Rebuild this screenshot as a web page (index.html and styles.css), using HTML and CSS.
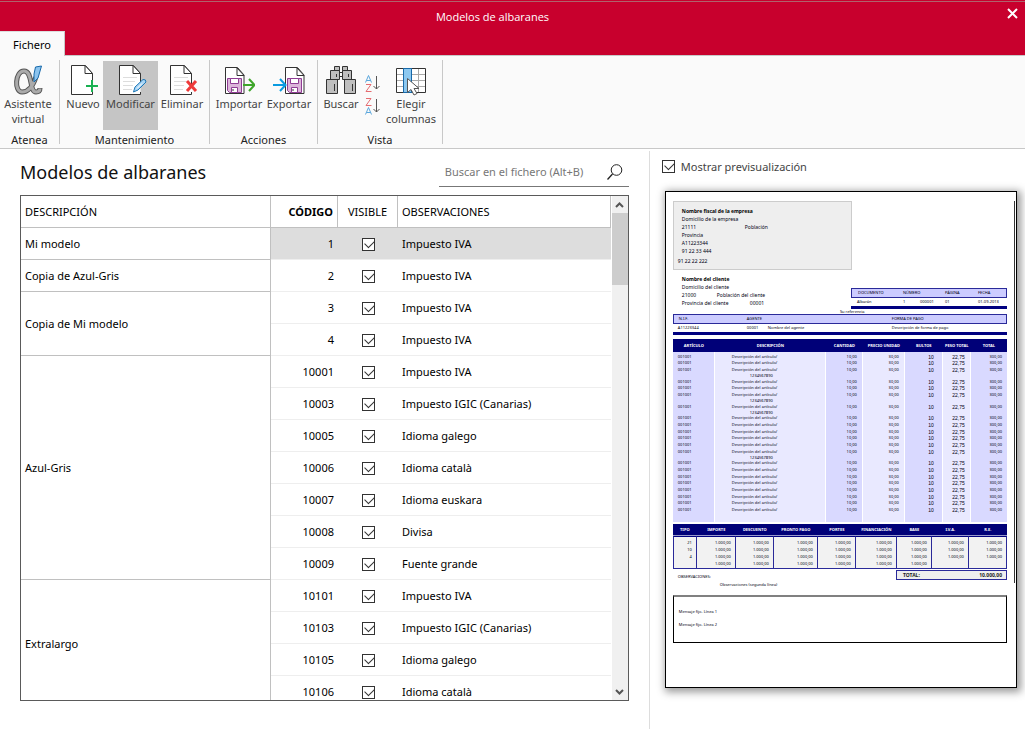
FILE: index.html
```html
<!DOCTYPE html>
<html lang="es">
<head>
<meta charset="utf-8">
<title>Modelos de albaranes</title>
<link rel="stylesheet" href="styles.css">
</head>
<body>
<svg class="defs" aria-hidden="true">
  <symbol id="sheet" viewBox="0 0 32 32">
    <path d="M25.500 20V9.500L18.500 1.500H4.500V30.500H25.500V28" fill="#fff" stroke="#333"/>
    <path d="M18 1.500V9.500H25.500Z" fill="#fff" stroke="#333" stroke-linejoin="round"/>
  </symbol>
  <symbol id="lines" viewBox="0 0 32 32"><path d="M8 13.500H22M8 17.500H20M8 21.500H18M8 25.500H17" stroke="#ddd"/></symbol>
  <symbol id="disk" viewBox="0 0 20 28">
    <path d="M.5.5H12.500L19 8V26.500H.5Z" fill="#fff" stroke="#333"/>
    <path d="M12 1V8.500H19Z" fill="#fff" stroke="#333"/>
    <path d="M2.500 11.500H16.500V25.500H4.500L2.500 23.500Z" fill="#dcb5da" stroke="#8f3d94"/>
    <path d="M5.500 11.500H13.500V16.500H5.500ZM6.500 20.500H12.500V25.500H6.500Z" fill="#fff" stroke="#8f3d94"/>
    <path d="M8 22V24" stroke="#333"/>
  </symbol>
  <symbol id="down" viewBox="0 0 7 14"><path d="M3.500 0V13M.5 10L3.500 13L6.500 10" fill="none" stroke="#555"/></symbol>
</svg>
<div class="window">
  <header class="titlebar">
    <h1 class="window-title">Modelos de albaranes</h1>
    <button class="tab" type="button">Fichero</button>
    <button class="close" type="button" aria-label="Cerrar"><svg width="11" height="11" viewBox="0 0 11 11"><path d="M1 1L10 10M10 1L1 10" stroke="#fff" stroke-width="2"/></svg></button>
  </header>
  <nav class="ribbon">
    <section class="group atenea">
      <div class="tools">
        <button class="tool" type="button">
          <svg class="icon" viewBox="0 0 32 32">
            <path d="M24 13C21 22 16 28 10 28C2 28 3 7 12 7C21 7 17 28 24 28Q28 28 28 24" fill="none" stroke="#555" stroke-width="5"/>
            <path d="M24 13C21 22 16 28 10 28C2 28 3 7 12 7C21 7 17 28 24 28Q28 28 28 24.500" fill="none" stroke="#aaa" stroke-width="3"/>
            <path d="M23.500 3L29.500 2L26 14L22 18V10Z" fill="#8cc4ef" stroke="#1769aa"/>
          </svg>Asistente<br>virtual</button>
      </div>
      <h2 class="group-name">Atenea</h2>
    </section>
    <section class="group mantenimiento">
      <div class="tools">
        <button class="tool new" type="button"><svg class="icon" viewBox="0 0 32 32"><use href="#sheet"/><path d="M25 16V28M19 22H31" stroke="#18b050" stroke-width="2"/></svg>Nuevo</button>
        <button class="tool active" type="button"><svg class="icon" viewBox="0 0 32 32"><use href="#sheet"/><use href="#lines"/><path d="M18.500 28L20 23L28 15.500Q31 15 31 18L23 26Z" fill="#a9d5f5" stroke="#1d78b8"/><path d="M22 24.500L27 19.500" stroke="#fff"/></svg>Modificar</button>
        <button class="tool" type="button"><svg class="icon" viewBox="0 0 32 32"><use href="#sheet"/><use href="#lines"/><path d="M21 17L30 27M30 17L21 27" stroke="#ee3a3a" stroke-width="3"/></svg>Eliminar</button>
      </div>
      <h2 class="group-name">Mantenimiento</h2>
    </section>
    <section class="group acciones">
      <div class="tools">
        <button class="tool" type="button"><svg class="icon" viewBox="0 0 32 32"><use href="#disk" x="2" y="3" width="20" height="28"/><path d="M20 21H31M26 15L31.500 21L26 27" fill="none" stroke="#3fa62b" stroke-width="2"/></svg>Importar</button>
        <button class="tool" type="button"><svg class="icon" viewBox="0 0 32 32"><use href="#disk" x="12" y="3" width="20" height="28"/><path d="M0 21H12M7 15L12.500 21L7 27" fill="none" stroke="#0a9be0" stroke-width="2"/></svg>Exportar</button>
      </div>
      <h2 class="group-name">Acciones</h2>
    </section>
    <section class="group vista">
      <div class="tools">
        <button class="tool find" type="button"><svg class="icon" viewBox="0 0 32 32"><path d="M9.500 2.500H14.500V6.500H9.500ZM17.500 2.500H22.500V6.500H17.500ZM5.500 6.500H14.500V15.500H5.500ZM17.500 6.500H26.500V15.500H17.500ZM1.500 15.500H12.500V29.500H1.500ZM19.500 15.500H30.500V29.500H19.500Z" fill="#bfbfbf" stroke="#333"/><path d="M14.500 8.500H17.500M14.500 12.500H17.500M9.500 20V27M27.500 20V27M11.500 10V13M23.500 10V13" stroke="#333"/></svg>Buscar</button>
        <div class="sorts">
          <button class="sort" type="button" aria-label="Orden ascendente"><svg width="15" height="17" viewBox="0 0 15 17"><path d="M.5 7.500L3.500.5L6.500 7.500M1.500 5.500H5.500" fill="none" stroke="#5ba7dc"/><path d="M1 9.500H6L1 16.500H6.500" fill="none" stroke="#e56b70"/><use href="#down" x="8" y="1" width="7" height="14"/></svg></button>
          <button class="sort" type="button" aria-label="Orden descendente"><svg width="15" height="17" viewBox="0 0 15 17"><path d="M1 .5H6L1 7.500H6.500" fill="none" stroke="#e56b70"/><path d="M.5 16.500L3.500 9.500L6.500 16.500M1.500 14.500H5.500" fill="none" stroke="#5ba7dc"/><use href="#down" x="8" y="1" width="7" height="14"/></svg></button>
        </div>
        <button class="tool columns" type="button"><svg class="icon" viewBox="0 0 32 32"><path d="M1.500 4.500H30.500V28.500H1.500Z" fill="#fff" stroke="#333"/><path d="M2 10.500H30M2 16.500H30M2 22.500H30M23.500 5V28" stroke="#aaa"/><path d="M8.500 4.500H16.500V28.500H8.500Z" fill="#8cc8f0" stroke="#1769aa"/><path d="M12.500 14.500V28.500L16 25.500L19 31L22 29.500L19 24.500H24Z" fill="#fff" stroke="#555"/></svg>Elegir<br>columnas</button>
      </div>
      <h2 class="group-name">Vista</h2>
    </section>
  </nav>
  <main class="content">
    <section class="list">
      <div class="list-head">
        <h2 class="list-title">Modelos de albaranes</h2>
        <div class="search">
          <input class="search-box" type="text" aria-label="Buscar en el fichero" placeholder="Buscar en el fichero (Alt+B)">
          <button class="search-go" type="button" aria-label="Buscar"><svg width="16" height="16" viewBox="0 0 16 16"><circle cx="9.500" cy="6" r="5.300" fill="none" stroke="#222"/><path d="M5.500 10L.5 15.500" stroke="#222" stroke-width="1.300"/></svg></button>
        </div>
      </div>
      <div class="grid-frame">
        <div class="grid-view">
          <table class="grid">
            <colgroup><col class="c-desc"><col class="c-code"><col class="c-vis"><col></colgroup>
            <thead><tr><th>DESCRIPCIÓN</th><th class="code sorted">CÓDIGO</th><th class="vis">VISIBLE</th><th>OBSERVACIONES</th></tr></thead>
            <tbody id="models"></tbody>
          </table>
        </div>
        <div class="scroll">
          <button class="arrow" type="button" aria-label="Subir"><svg width="9" height="6" viewBox="0 0 9 6"><path d="M1 5L4.500 1.500L8 5" fill="none" stroke="#555" stroke-width="2"/></svg></button>
          <div class="thumb"></div>
          <button class="arrow last" type="button" aria-label="Bajar"><svg width="9" height="6" viewBox="0 0 9 6"><path d="M1 1L4.500 4.500L8 1" fill="none" stroke="#555" stroke-width="2"/></svg></button>
        </div>
      </div>
    </section>
    <aside class="preview">
      <label class="show"><input class="check" type="checkbox" checked>Mostrar previsualización</label>
      <article class="paper">
        <div class="rule"></div>
        <div class="company">
          <p class="strong">Nombre fiscal de la empresa</p>
          <p>Domicilio de la empresa</p>
          <p class="pair"><span class="wide">21111</span><span>Población</span></p>
          <p>Provincia</p>
          <p>A11223344</p>
          <p>91 22 33 444</p>
          <p class="phone">91 22 22 222</p>
        </div>
        <div class="who">
          <div class="client">
            <p class="strong">Nombre del cliente</p>
            <p>Domicilio del cliente</p>
            <p class="pair"><span class="zip">21000</span><span>Población del cliente</span></p>
            <p class="pair"><span class="prov">Provincia del cliente</span><span>00001</span></p>
          </div>
          <table class="strip doc">
            <colgroup><col class="d1"><col class="d2"><col class="d3"><col class="d4"><col></colgroup>
            <thead><tr><th>DOCUMENTO</th><th colspan="2">NÚMERO</th><th>PÁGINA</th><th>FECHA</th></tr></thead>
            <tbody><tr><td>Albarán</td><td>1</td><td>000001</td><td>01</td><td>01-09-2013</td></tr></tbody>
          </table>
        </div>
        <p class="ref">Su referencia</p>
        <table class="strip agent">
          <colgroup><col class="a1"><col class="a2"><col class="a3"><col></colgroup>
          <thead><tr><th>N.I.F.</th><th colspan="2">AGENTE</th><th>FORMA DE PAGO</th></tr></thead>
          <tbody><tr><td>A11223344</td><td>00001</td><td>Nombre del agente</td><td>Descripción de forma de pago</td></tr></tbody>
        </table>
        <table class="items">
          <colgroup><col class="i1"><col class="i2"><col class="i3"><col class="i4"><col class="i5"><col class="i6"><col></colgroup>
          <thead><tr><th>ARTÍCULO</th><th>DESCRIPCIÓN</th><th>CANTIDAD</th><th>PRECIO UNIDAD</th><th>BULTOS</th><th>PESO TOTAL</th><th>TOTAL</th></tr></thead>
          <tbody id="items"></tbody>
        </table>
        <table class="taxes">
          <colgroup><col class="t1"><col class="t2"><col class="t3"><col class="t4"><col class="t5"><col class="t6"><col class="t7"><col class="t8"><col></colgroup>
          <thead><tr><th>TIPO</th><th>IMPORTE</th><th>DESCUENTO</th><th>PRONTO PAGO</th><th>PORTES</th><th>FINANCIACIÓN</th><th>BASE</th><th>I.V.A.</th><th>R.E.</th></tr></thead>
          <tbody id="taxes"></tbody>
        </table>
        <div class="sum"><p class="obs">OBSERVACIONES:</p><p class="total"><span>TOTAL:</span><span>10.000,00</span></p></div>
        <p class="obs2">Observaciones (segunda línea)</p>
        <div class="message"><p>Mensaje fijo. Línea 1</p><p>Mensaje fijo. Línea 2</p></div>
      </article>
    </aside>
  </main>
</div>
<script src="main.js"></script>
</body>
</html>
```
FILE: main.js
```js
const groups = [
  ["Mi modelo", [[1, "Impuesto IVA"]]],
  ["Copia de Azul-Gris", [[2, "Impuesto IVA"]]],
  ["Copia de Mi modelo", [[3, "Impuesto IVA"], [4, "Impuesto IVA"]]],
  ["Azul-Gris", [[10001, "Impuesto IVA"], [10003, "Impuesto IGIC (Canarias)"], [10005, "Idioma galego"],
    [10006, "Idioma català"], [10007, "Idioma euskara"], [10008, "Divisa"], [10009, "Fuente grande"]]],
  ["Extralargo", [[10101, "Impuesto IVA"], [10103, "Impuesto IGIC (Canarias)"], [10105, "Idioma galego"], [10106, "Idioma català"]]]
];

document.getElementById("models").innerHTML = groups.map(([name, rows]) =>
  rows.map(([code, note], i) =>
    `<tr${code === 1 ? ' class="selected"' : ""}>` +
    (i === 0 ? `<th class="desc" scope="rowgroup" rowspan="${rows.length}">${name}</th>` : "") +
    `<td class="code">${code}</td>` +
    `<td class="vis"><input class="check" type="checkbox" checked aria-label="Visible ${code}"></td>` +
    `<td>${note}</td></tr>`).join("")).join("");

// Lines whose description carries on to a second row.
const twoLine = [2, 5, 6, 12];
let items = "";
for (let i = 0; i < 21; i++) {
  const more = twoLine.includes(i) ? '<span class="more">1234567890</span>' : "";
  items += `<tr><td>001001</td><td class="text">Descripción del artículo/${more}</td><td>10,00</td>` +
    `<td>30,00</td><td class="plain">10</td><td class="plain">22,75</td><td>300,00</td></tr>`;
}
document.getElementById("items").innerHTML = items + '<tr class="rest">' + "<td></td>".repeat(7) + "</tr>";

const amount = "1.000,00";
document.getElementById("taxes").innerHTML = ["21", "10", "4", ""].map((rate) => {
  const last = rate ? amount : "";
  return `<tr><td>${rate}</td>` + `<td>${amount}</td>`.repeat(6) + `<td>${last}</td>`.repeat(2) + "</tr>";
}).join("");
```
FILE: styles.css
```css
* { box-sizing: border-box; }
body { margin: 0; background: #fff; color: #111; font: 11px/15px "Noto Sans", "Open Sans", sans-serif; }
h1, h2, p { margin: 0; font-weight: normal; }
button, input { font: inherit; color: inherit; }
button { margin: 0; padding: 0; border: 0; background: none; }
table { border-collapse: separate; border-spacing: 0; table-layout: fixed; width: 100%; }
th { font-weight: normal; text-align: left; }
svg { display: block; }
.defs { display: none; }
.window { display: flex; flex-direction: column; height: 100vh; min-height: 640px; }

.titlebar { display: grid; grid-template-columns: 1fr auto 1fr; grid-template-rows: 30px 24px; border-top: 1px solid #c8002d; border-bottom: 1px solid #c8c8c8; background: linear-gradient(#b0626c, #b0626c) top / 100% 1px no-repeat, #c8002d; height: 56px; }
.window-title { grid-column: 1 / 4; grid-row: 1; justify-self: center; padding: 8px 40px 0 0; font: 11px/15px "Open Sans", "Noto Sans", sans-serif; color: #fff; }
.close { grid-column: 3; grid-row: 1; justify-self: end; align-self: start; margin: 7px 7px 0 0; }
.tab { grid-column: 1; grid-row: 2; justify-self: start; width: 65px; height: 25px; border-right: 1px solid #c8c8c8; border-top: 1px solid #ddd; background: #fafafa; color: #000; }

.ribbon { display: flex; height: 93px; border-bottom: 1px solid #c8c8c8; padding: 4px 0; background: #fafafa; color: #444; }
.group { display: flex; flex-direction: column; justify-content: space-between; align-items: center; border-right: 1px solid #c8c8c8; }
.atenea { width: 60px; }
.mantenimiento { width: 150px; }
.acciones { width: 108px; }
.vista { width: 125px; }
.tools { display: flex; align-self: stretch; padding: 1px 0 0 3px; }
.tool { display: flex; flex-direction: column; align-items: center; width: 50px; height: 69px; padding-top: 3px; white-space: nowrap; line-height: 15px; text-align: center; }
.acciones .tools { padding-left: 4px; }
.vista .tools { padding-left: 0; }
.mantenimiento .tool { width: 48px; }
.mantenimiento .new { width: 40px; }
.mantenimiento .active { width: 55px; background: #c5c5c5; }
.vista .find { width: 46px; }
.vista .columns { width: 60px; }
.icon { width: 32px; height: 32px; flex: none; }
.tool br { display: block; }
.group-name { margin-bottom: -4px; font-size: 11px; line-height: 17px; color: #222; }
.sorts { display: flex; flex-direction: column; gap: 6px; width: 17px; padding-top: 14px; align-items: center; }

.content { display: flex; flex: 1; min-height: 0; }
.list { display: flex; flex: 1; flex-direction: column; min-width: 0; padding: 10px 20px 28px; }
.list-head { display: flex; justify-content: space-between; height: 36px; }
.list-title { font-size: 18px; line-height: 27px; color: #111; }
.search { display: flex; width: 190px; height: 28px; border-bottom: 1px solid #777; align-items: center; padding: 0 6px 2px; }
.search-box { flex: 1; min-width: 0; padding: 0; border: 0; outline: 0; background: none; }
.search-box::placeholder { color: #777; opacity: 1; }
.grid-frame { display: flex; flex: 1; min-height: 0; border: 1px solid #5a5a5a; color: #000; }
.grid-view { flex: 1; overflow: hidden; }
.grid tr { height: 32px; }
.grid th, .grid td { height: 32px; padding: 0 4px; border-bottom: 1px solid #eee; vertical-align: middle; }
.grid th { border-bottom-color: #c0c0c0; border-right: 1px solid #c0c0c0; }
.c-desc { width: 250px; }
.c-code { width: 67px; }
.c-vis { width: 60px; }
.grid .code { text-align: right; }
.grid .sorted { font-weight: bold; }
.grid .vis { text-align: center; }
.selected td { background: #ddd; }
.check { appearance: none; display: inline-block; position: relative; width: 13px; height: 13px; margin: 0; border: 1px solid #333; background: #fff; vertical-align: middle; }
.check:checked::after { content: ""; position: absolute; left: 2px; top: 1px; width: 8px; height: 5px; border: solid #333; border-width: 0 0 1px 1px; transform: rotate(-45deg); }
.scroll { display: flex; flex-direction: column; width: 16px; margin-left: 1px; background: #f0f0f0; }
.arrow { display: grid; place-items: center; height: 17px; }
.thumb { height: 72px; background: #cdcdcd; }
.last { margin-top: auto; }

.preview { display: flex; flex-direction: column; width: 36.7%; margin-top: 2px; border-left: 1px solid #ddd; padding: 8px 8px 41px 15px; }
.show { display: flex; align-items: center; gap: 6px; height: 15px; margin: 0 0 17px -3px; color: #444; }
.paper { position: relative; flex: 1; border: 1px solid #000; padding: 9px 9px 0 7px; background: #fff; box-shadow: 2px 2px 8px 2px #999; font-size: 4px; line-height: 6px; color: #001; }
.rule { position: absolute; top: 9px; right: 1px; width: 1px; height: 382px; background: #333; }
.strong { font-weight: bold; color: #000; }
.pair { display: flex; }
.company { width: 179px; height: 69px; border: 1px solid #ccc; padding: 5px 8px; background: #eee; font-size: 5px; line-height: 8px; }
.wide { width: 63px; }
.zip { width: 35px; }
.prov { width: 68px; }
.company .phone { margin: 2px 0 0 -4px; }
.who { display: flex; justify-content: space-between; align-items: flex-end; margin-top: 5px; }
.client { padding: 0 0 2px 9px; font-size: 5px; line-height: 8px; }
.strip { border-bottom: 3px solid navy; }
.strip th { height: 10px; padding: 0 0 0 5px; border: solid #2a2a99; border-width: 1px 0; background: #ccf; line-height: 8px; }
.strip th:first-child { border-left-width: 1px; }
.strip th:last-child { border-right-width: 1px; }
.strip td { height: 8px; padding: 0 0 0 5px; }
.doc { width: 156px; }
.doc th, .doc td { padding-left: 6px; white-space: nowrap; }
.d1 { width: 46px; }
.d2 { width: 17px; }
.d3 { width: 25px; }
.d4 { width: 33px; }
.ref { padding-left: 50%; line-height: 5px; }
.a1 { width: 69px; }
.a2 { width: 21px; }
.a3 { width: 124px; }
.items { margin-top: 4px; }
.items th { height: 13px; padding: 0; background: #000078; color: #fff; font-weight: bold; text-align: center; white-space: nowrap; }
.items tbody tr { height: 6px; }
.items td { padding: 0 5px 1px; border-right: 1px solid #fff; background: #d9d9ff; line-height: 6px; text-align: right; vertical-align: top; white-space: nowrap; }
.items tr:nth-child(3n+1) td { padding-bottom: 0; }
.items tbody tr:first-child td { padding-top: 2px; }
.items td:nth-child(even) { background: #e9e9ff; }
.items td:first-child { text-align: left; }
.items td:last-child { border-right: 0; }
.items .text { padding-left: 17px; text-align: left; }
.items .plain { font: 5px/6px "Liberation Sans", sans-serif; }
.items .plain:nth-child(5) { padding-right: 8px; }
.more { display: block; padding-left: 18px; line-height: 5px; }
.items .rest td { height: 8px; }
.i1 { width: 42px; }
.i2 { width: 111px; }
.i3 { width: 37px; }
.i4 { width: 42px; }
.i5 { width: 38px; }
.i6 { width: 28px; }
.taxes { margin-top: 2px; border-bottom: 1px solid #2a2a99; }
.taxes th { height: 12px; padding: 0; border-bottom: 1px solid #99c; background: #000078; color: #fff; font-weight: bold; text-align: center; white-space: nowrap; }
.taxes td { height: 7px; padding: 0 4px 0 0; border-right: 1px solid #2a2a99; background: #f2f2f2; line-height: 7px; text-align: right; }
.taxes td:first-child { border-left: 1px solid #2a2a99; }
.taxes tbody tr:first-child td { padding-top: 2px; border-top: 1px solid navy; }
.taxes tbody tr:last-child td { padding-bottom: 1px; }
.t1 { width: 24px; }
.t2 { width: 39px; }
.t3 { width: 38px; }
.t4 { width: 44px; }
.t5 { width: 38px; }
.t6 { width: 41px; }
.t7 { width: 35px; }
.t8 { width: 37px; }
.sum { display: flex; justify-content: space-between; margin-top: 1px; }
.obs { padding: 4px 0 0 5px; }
.total { display: flex; justify-content: space-between; width: 111px; height: 10px; border: 1px solid #2a2a99; padding: 0 4px 0 6px; background: #eee; font: bold 5px/8px "Noto Sans", sans-serif; color: #222; }
.obs2 { padding: 2px 0 7px 47px; }
.message { border: 1px solid #000; border-top: 2px solid #808080; padding: 12px 5px 14px; }
.message p + p { margin-top: 7px; }
```
